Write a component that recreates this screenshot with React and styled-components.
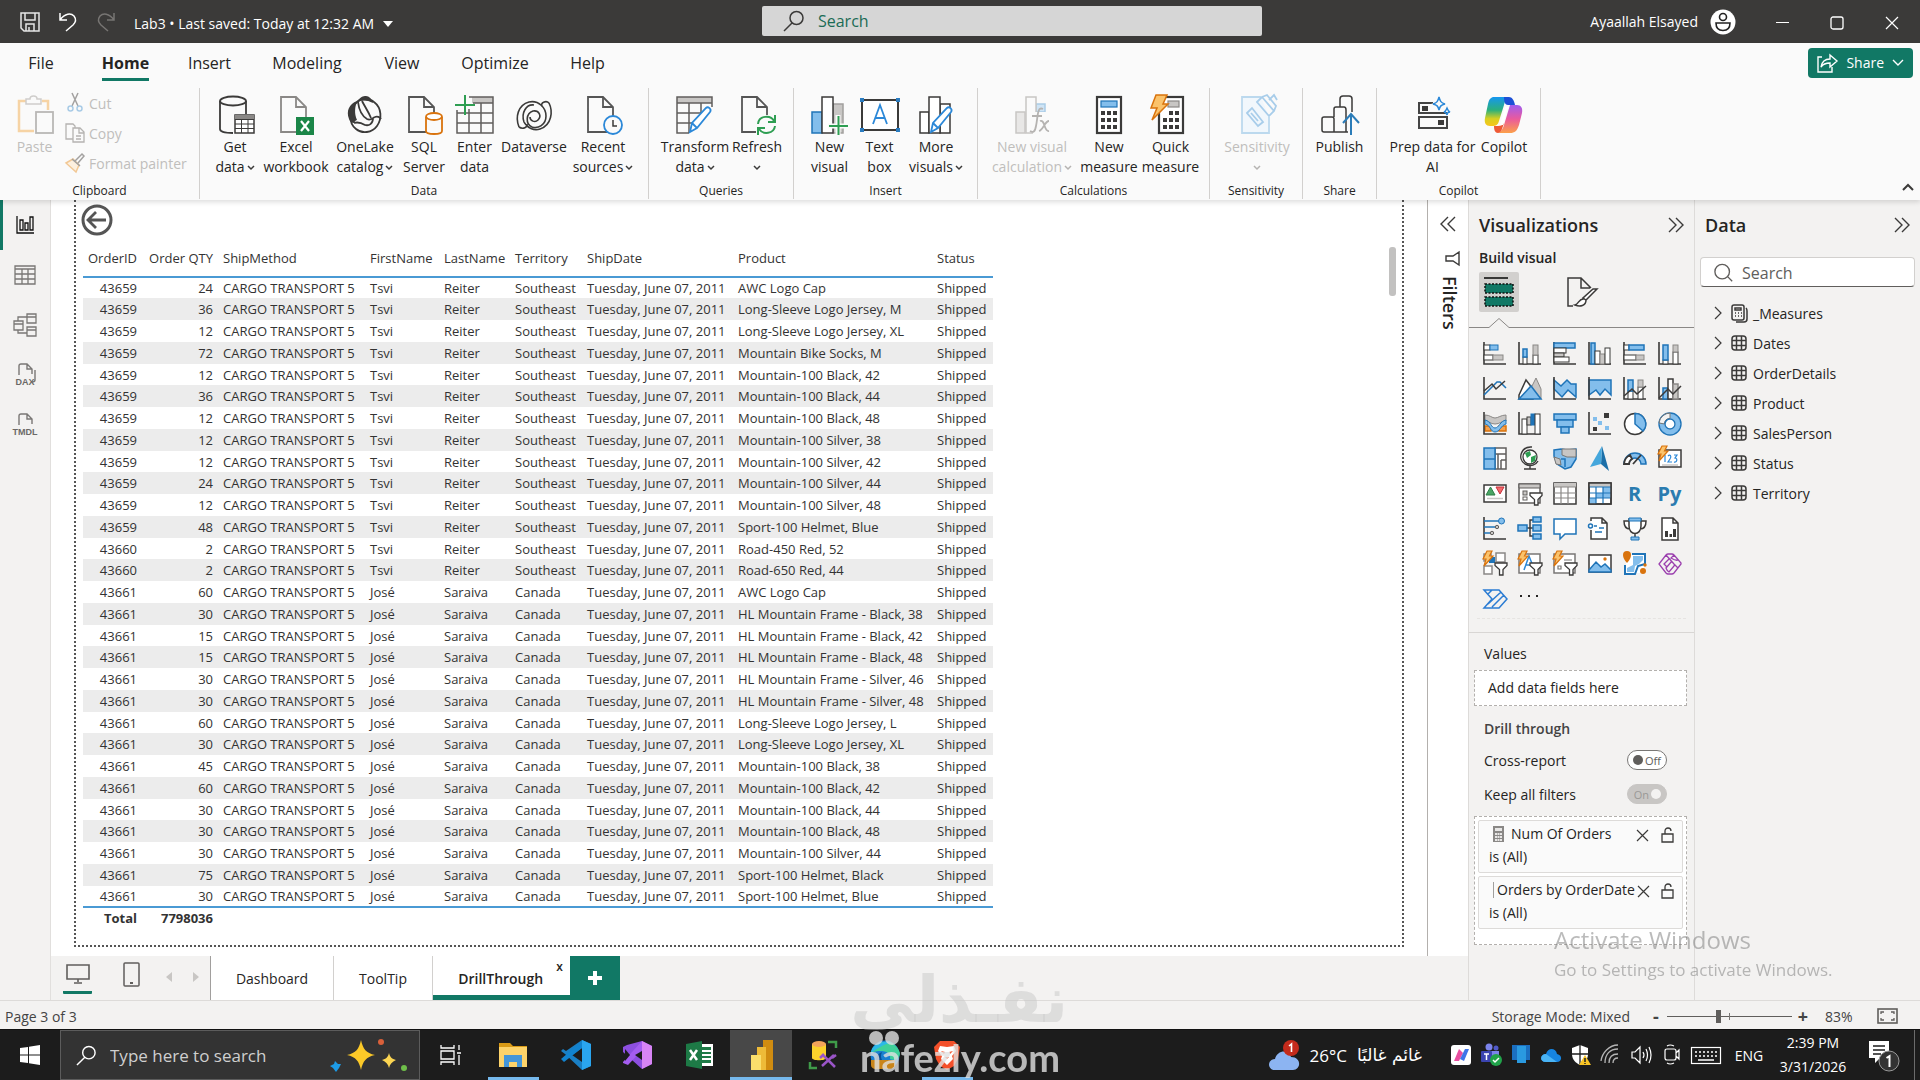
import React from "react";
import styled, { createGlobalStyle, css } from "styled-components";

const INK = "#3b3a39";
const BLUE = "#1f74b8";
const SKY = "#83beec";
const GREY = "#c8c6c4";
const GREEN = "#117865";
const ORANGE = "#d9730d";

const GlobalStyle = createGlobalStyle`
  *, *::before, *::after { box-sizing: border-box; }
  body {
    margin: 0;
    font-family: "Open Sans", "Noto Sans", "DejaVu Sans", sans-serif;
    font-size: 14px;
    color: #252423;
    background: #f3f2f1;
  }
  button, input { font: inherit; color: inherit; }
  button { margin: 0; padding: 0; border: 0; background: none; cursor: pointer; }
`;

/* ---------- drawing helpers ---------- */

const Svg = styled.svg`
  display: block;
  flex: none;
  overflow: visible;
`;

const Icon = ({ w = 24, h = w, box = `0 0 ${w} ${h}`, children }) => (
  <Svg width={w} height={h} viewBox={box} fill="none" aria-hidden="true">
    {children}
  </Svg>
);

const P = ({ d, s = INK, f = "none", w = 1.5, ...rest }) => (
  <path d={d} stroke={s} fill={f} strokeWidth={w} {...rest} />
);
const R = ({ x, y, w, h, s = INK, f = "none", sw = 1.5, ...rest }) => (
  <rect x={x} y={y} width={w} height={h} stroke={s} fill={f} strokeWidth={sw} {...rest} />
);

const ChevronDown = ({ color = INK }) => (
  <Icon w={8} h={5}>
    <P d="M1 1l3 3 3-3" s={color} />
  </Icon>
);
const DoubleChevron = ({ left }) => (
  <Icon w={16} h={16}>
    <P d={left ? "M8 1L1 8l7 7M15 1L8 8l7 7" : "M1 1l7 7-7 7M8 1l7 7-7 7"} w={1.4} />
  </Icon>
);
const Magnifier = ({ color, size = 22, flip }) => (
  <Icon w={size} box="0 0 22 22">
    {flip ? (
      <P d="M13.5 1.5a6.5 6.5 0 1 1 0 13 6.5 6.5 0 0 1 0-13zM9 13l-8 8" s={color} />
    ) : (
      <P d="M9 1.5a8 8 0 1 1 0 16 8 8 0 0 1 0-16zM15 15l5 5" s={color} />
    )}
  </Icon>
);
const Bolt = () => <P d="M4-1L9-1 6.5 4H10L1 14 3 7H0z" s={ORANGE} f="#fbc36b" w={1.2} />;
const Funnel = () => <P d="M12 11H24V13.5L20 17.5V23H16.5V17.5L12 13.5z" f="#fff" w={1.3} />;
const Pencil = () => (
  <P d="M15 37l2-9L31 13c2-2 6 1 4 4L22 33z M17 28l5 5" s="#2b88d8" f="#fff" w={1.8} />
);

/* ---------- title bar ---------- */

const Shell = styled.div`
  display: flex;
  flex-direction: column;
  min-height: 100vh;
`;
const TitleBar = styled.header`
  display: grid;
  grid-template-columns: 1.158fr minmax(200px, 500px) 1fr;
  align-items: center;
  height: 43px;
  background: #3b3a39;
  color: #fff;
`;
const QuickAccess = styled.div`
  display: flex;
  align-items: center;
  gap: 18px;
  padding-left: 20px;
`;
const FileName = styled.button`
  display: flex;
  align-items: center;
  gap: 9px;
  padding-top: 4px;
  white-space: nowrap;
`;
const TopSearch = styled.label`
  display: flex;
  align-items: center;
  gap: 13px;
  height: 30px;
  margin-bottom: 1px;
  padding-left: 21px;
  border-radius: 2px;
  background: #d6d6d6;
`;
const PlainInput = styled.input`
  flex: 1;
  min-width: 0;
  padding: 0;
  border: 0;
  outline: 0;
  background: none;
  font-size: 16px;
  &::placeholder { color: ${(p) => p.$hint}; opacity: 1; }
`;
const WindowControls = styled.div`
  display: flex;
  align-items: center;
  justify-content: flex-end;
`;
const UserName = styled.span`
  margin-right: 12px;
`;
const WindowButton = styled.button`
  display: grid;
  place-items: center;
  width: 55px;
  height: 43px;
`;
const Avatar = styled.button`
  margin-right: 19px;
`;

const Title = () => (
  <TitleBar>
    <QuickAccess>
      <button aria-label="Save">
        <Icon w={20}>
          <P d="M1 1H19V19H4L1 16zM5 1V8H15V1M6 19V12H14V19M9 15V19" s="#e6e6e6" />
        </Icon>
      </button>
      <button aria-label="Undo">
        <Icon w={20}>
          <P d="M2 1V8H9M2 8C7 1 13 1 16 4c3 4 1 7-1 9L8 19" s="#fff" />
        </Icon>
      </button>
      <button aria-label="Redo">
        <Icon w={20}>
          <P d="M18 1V8H11M18 8C13 1 7 1 4 4c-3 4-1 7 1 9L12 19" s="#777573" />
        </Icon>
      </button>
      <FileName>
        Lab3 • Last saved: Today at 12:32 AM
        <Icon w={10} h={6}>
          <path d="M0 0H10L5 6z" fill="#fff" />
        </Icon>
      </FileName>
    </QuickAccess>
    <TopSearch>
      <Magnifier color={INK} flip />
      <PlainInput $hint="#1b6b55" placeholder="Search" aria-label="Search" />
    </TopSearch>
    <WindowControls>
      <UserName>Ayaallah Elsayed</UserName>
      <Avatar aria-label="Account">
        <Icon w={26}>
          <circle cx="13" cy="13" r="12.5" fill="#fff" />
          <circle cx="13" cy="8" r="3.5" stroke="#222" strokeWidth="1.6" />
          <P d="M6 14H20C20 19 17 21.5 13 21.5S6 19 6 14z" s="#222" w={1.6} />
        </Icon>
      </Avatar>
      <WindowButton aria-label="Minimize">
        <Icon w={14}><P d="M1 7.5H14" s="#fff" w={1} /></Icon>
      </WindowButton>
      <WindowButton aria-label="Maximize">
        <Icon w={14}><R x={1} y={2} w={12} h={12} s="#fff" sw={1.3} rx={2} /></Icon>
      </WindowButton>
      <WindowButton aria-label="Close">
        <Icon w={14}><P d="M1 2L13 14M13 2L1 14" s="#fff" w={1.2} /></Icon>
      </WindowButton>
    </WindowControls>
  </TitleBar>
);

/* ---------- ribbon icons ---------- */

const Sheet = ({ dim }) => (
  <>
    <P d="M5 2H20L30 12V37H5z" s={dim || "#555"} f="#fafafa" w={1.8} />
    <P d="M20 2V12H30" s={dim || "#555"} w={1.8} />
  </>
);

const ribbonIcons = {
  paste: (
    <>
      <P d="M11 6H4V36H19M27 6H33V15" s="#f6d3a4" w={2.5} />
      <P d="M11 4H15C15 0 22 0 22 4H26V9H11z" s="#cfcdcb" f="#fafafa" />
      <R x={21} y={17} w={17} h={21} s="#b9b7b5" f="#fafafa" sw={1.8} />
    </>
  ),
  getData: (
    <>
      <P d="M5 6V34c0 3 6 4 13 4V18H31V6" f="#fafafa" s="none" />
      <P d="M5 6V34c0 3 5 4 13 4M31 6V19" w={1.8} />
      <ellipse cx="18" cy="6" rx="13" ry="4.5" stroke={INK} strokeWidth="1.8" />
      <R x={20} y={20} w={19} h={18} f="#fff" />
      <rect x="20" y="20" width="19" height="4" fill="#8a8886" />
      <P d="M20 24.5H39M20 29H39M20 33.5H39M26.5 24V38M33 24V38" w={1} />
    </>
  ),
  excel: (
    <>
      <Sheet dim="#8a8886" />
      <R x={20} y={22} w={18} h={18} s="none" f="#1b8648" />
      <P d="M25 26L33 36M33 26L25 36" s="#fff" w={2.2} />
    </>
  ),
  onelake: (
    <>
      <P d="M12 7C16 3 24 3 29 7c8 6 8 17 3 24-5 7-15 8-21 3C3 28 4 14 12 7z" w={1.8} />
      <path d="M12 6C4 9 1 16 4 24c1 3 3 4 5 4 1-2 2-3 3-3-3-7-2-13 0-19z" fill={INK} />
      <path d="M13 6c2-4 5-5 8-5 3 0 6 3 7 7-5-3-10-3-15-2z" fill={INK} />
      <P d="M13 7c1 8 4 14 9 17 4 2 5-1 8-2 2-1 5 0 6 2M9 28c3-1 6-1 11 2 4 1 8-1 8-7M17 6c3 6 6 10 9 17" w={1.8} />
    </>
  ),
  sql: (
    <>
      <Sheet />
      <P d="M22 22V36c0 4 16 4 16 0V22" s={ORANGE} f="#fafafa" w={1.8} />
      <ellipse cx="30" cy="21.5" rx="8" ry="3.5" fill="#fff" stroke={ORANGE} strokeWidth="1.8" />
    </>
  ),
  enter: (
    <>
      <rect x="17" y="2" width="21" height="6" fill={GREY} />
      <P d="M14 2H38V38H2V15M2 18H38M2 28H38M14 14V38M26 8V38M18 8H38" s="#605e5c" />
      <P d="M10 0V20M0 10H20" s="#2e9e52" w={2} />
    </>
  ),
  dataverse: (
    <>
      <P d="M5 32C1 22 4 10 15 7c10-2 17 6 17 14 0 9-8 13-14 11-7-3-6-14 1-16 6-1 9 5 5 9-3 3-8 1-8-3" w={1.6} />
      <P d="M5 32c4 3 9 0 8-3M35 8c4 8 3 22-9 26-6 2-13-1-16-7C7 18 12 9 20 10M35 8c-3-3-9 0-7 3" w={1.6} />
    </>
  ),
  recent: (
    <>
      <Sheet />
      <circle cx="30" cy="30" r="9" fill="#fafafa" stroke="#2b88d8" strokeWidth="1.8" />
      <P d="M30 25V31H34" />
    </>
  ),
  transform: (
    <>
      <rect x="2" y="2" width="35" height="6" fill={GREY} />
      <P d="M37 12V2H2V38H14M2 8H37M2 18H27M2 28H18M14 8V38M26 8V18" s="#605e5c" />
      <Pencil />
    </>
  ),
  refresh: (
    <>
      <Sheet />
      <rect x="19" y="20" width="20" height="20" fill="#fafafa" />
      <P d="M21 29C22 20 34 20 37 26M38 20V27H31M38 31C37 39 26 40 22 34M21 40V33H28" s="#2e9e52" w={2} />
    </>
  ),
  newVisual: (
    <>
      <R x={2} y={17} w={10} h={21} f={SKY} s={BLUE} />
      <R x={23} y={9} w={10} h={29} f={GREY} s="#a19f9d" />
      <R x={12} y={2} w={11} h={36} f="#fff" />
      <P d="M28 20V40M18 31H38" s="#fafafa" w={5} />
      <P d="M28.5 21V40M19 31H38" s="#2e9e52" w={2} />
    </>
  ),
  textBox: (
    <>
      <R x={2} y={5} w={36} h={30} f="#fff" sw={2} />
      <P d="M13 29L20 10 27 29M15.5 23H24.5" s="#2b88d8" w={1.8} />
      <path d="M0 3h4v4H0zM36 3h4v4h-4zM0 33h4v4H0zM36 33h4v4h-4z" fill="#2b7cc0" />
    </>
  ),
  moreVisuals: (
    <>
      <P d="M4 17H13V38H4zM24 9H34V38H24z" f="#fff" />
      <R x={13} y={2} w={11} h={36} f="#fff" />
      <Pencil />
    </>
  ),
  visualCalc: (
    <>
      <R x={4} y={17} w={9} h={21} f="#e8e7e6" s={GREY} />
      <R x={24} y={9} w={9} h={8} f="#cfe4f5" s="#a9cbe6" />
      <R x={14} y={2} w={10} h={36} f="#fafafa" s={GREY} />
      <rect x="21" y="17" width="17" height="22" fill="#fafafa" />
      <P d="M31 14c-6-3-5 8-7 17-1 6-3 7-6 5M20 21H30M28 26c5-2 4 11 9 10M37 26c-4 0-6 9-10 10" s="#b5b3b1" w={1.8} />
    </>
  ),
  measure: (
    <>
      <R x={8} y={2} w={24} h={36} f="#fff" sw={2.2} />
      <R x={12} y={6} w={16} h={6} f={SKY} s={BLUE} sw={1.2} />
      <path d="M12 16h4v4h-4zM18 16h4v4h-4zM24 16h4v4h-4zM12 23h4v4h-4zM18 23h4v4h-4zM24 23h4v4h-4zM12 30h4v4h-4zM18 30h4v4h-4zM24 30h4v4h-4z" fill={INK} />
    </>
  ),
  quick: (
    <>
      <R x={8} y={2} w={24} h={36} f="#fff" sw={2.2} />
      <R x={17} y={6} w={11} h={6} f={GREY} s="#8a8886" sw={1.2} />
      <path d="M18 16h4v4h-4zM24 16h4v4h-4zM12 23h4v4h-4zM18 23h4v4h-4zM24 23h4v4h-4zM12 30h4v4h-4zM18 30h4v4h-4zM24 30h4v4h-4z" fill={INK} />
      <P d="M5 0H16L12 9H17L1 25 6 13H0z" s={ORANGE} f="#fbc36b" />
    </>
  ),
  sensitivity: (
    <>
      <P d="M24 2H5V38H32V22" s="#bcd9ee" f="#f1f7fc" w={1.8} />
      <P d="M10 18L15 13 26 27 21 31zM14 18L21 26M20 7L25 2 37 16 32 21zM25 2L30 0 39 11 37 16M32 5L37 0 40 5" s="#a8cdea" w={1.8} />
    </>
  ),
  publish: (
    <>
      <P d="M14 22V14q0-2 2-2h4V4q0-3 3-3h6q3 0 3 3V17M4 22h8q2 0 2 2V37H4q-2 0-2-2V24q0-2 2-2zM14 37H28M20 12h4q2 0 2 3V37" />
      <P d="M31 40V20M23 28L31 19 39 28" s="#2b7cb8" w={2} />
    </>
  ),
  prep: (
    <>
      <P d="M20 8H6V18H34M6 22H34V33H6z" s="#444" w={2} />
      <path d="M9 11h6v5H9zM25 25h6v5h-6z" fill={INK} />
      <path d="M26 0c1 5 3 8 8 9-5 1-7 3-8 8-1-5-3-7-8-8 5-1 7-4 8-9z" fill="#fafafa" />
      <P d="M26 2c1 4 2 6 6 7-4 1-5 2-6 6-1-4-2-5-6-6 4-1 5-3 6-7zM34 13c1 2 1 3 3 4-2 0-3 1-3 3-1-2-1-3-3-3 2-1 2-2 3-4z" s="#2b88d8" w={1.5} />
    </>
  ),
  copilot: (
    <>
      <defs>
        <linearGradient id="cpA" x1="0" y1="0" x2="0" y2="1">
          <stop offset="0" stopColor="#1596f0" />
          <stop offset=".45" stopColor="#2bb07c" />
          <stop offset=".75" stopColor="#d9cf1f" />
          <stop offset="1" stopColor="#f7c51c" />
        </linearGradient>
        <linearGradient id="cpB" x1="0" y1="0" x2="0" y2="1">
          <stop offset="0" stopColor="#a05cf0" />
          <stop offset=".5" stopColor="#ea5a9c" />
          <stop offset="1" stopColor="#fca04a" />
        </linearGradient>
      </defs>
      <path d="M14 38H26c5 0 7-2 9-8l3-12c1-5-1-8-5-8H26L20 30c-1 4-4 8-6 8z" fill="url(#cpB)" />
      <path d="M10 2H25c-3 1-4 4-5 8L15 26c-1 4-3 5-7 5H6c-4 0-6-3-5-8L4 9C5 4 7 2 10 2z" fill="url(#cpA)" />
      <path d="M20 2h5c3 0 5 3 6 8h-7c-3 0-4-3-4-8z" fill="#1c4fd6" />
      <path d="M10 31h4c3 0 5-1 6-3l-2 6c-1 3-3 4-4 4-3 0-4-3-4-7z" fill="#ee5a36" />
      <path d="M24 12H21L16 30H19z" fill="#fff" />
    </>
  ),
};

/* ---------- ribbon ---------- */

const Ribbon = styled.section`
  position: relative;
  z-index: 1;
  height: 157px;
  background: #fafafa;
  box-shadow: 0 2px 5px rgba(0, 0, 0, 0.14);
`;
const TabRow = styled.nav`
  display: flex;
  align-items: center;
  height: 39px;
`;
const RibbonTab = styled.button`
  width: ${(p) => p.$w}px;
  height: 39px;
  font-size: 16px;
  font-weight: ${(p) => (p.$active ? 700 : 400)};
  text-align: center;
  span {
    display: inline-block;
    height: 36px;
    line-height: 36px;
    border-bottom: 3px solid ${(p) => (p.$active ? GREEN : "transparent")};
  }
`;
const ShareButton = styled.button`
  display: flex;
  align-items: center;
  gap: 8px;
  height: 30px;
  margin: 0 7px 0 auto;
  padding: 0 9px;
  border-radius: 4px;
  background: ${GREEN};
  color: #fff;
`;
const RibbonBody = styled.div`
  display: flex;
  height: 118px;
  padding-top: 6px;
`;
const Group = styled.div`
  display: flex;
  flex-direction: column;
  flex: none;
  width: ${(p) => p.$w}px;
  height: 111px;
  border-right: 1px solid #d2d0ce;
`;
const GroupItems = styled.div`
  display: flex;
  flex: 1;
  padding: ${(p) => (p.$flush ? "0" : "5px 0 0 10px")};
`;
const GroupName = styled.div`
  height: 16px;
  font-size: 12px;
  line-height: 16px;
  text-align: center;
`;
const BigButton = styled.button`
  display: flex;
  flex-direction: column;
  align-items: center;
  flex: none;
  width: ${(p) => p.$w}px;
  color: ${(p) => (p.disabled ? "#c0bebc" : "#252423")};
  line-height: 20px;
  white-space: nowrap;
`;
const PasteButton = styled(BigButton)`
  padding: 5px 0 0 4px;
`;
const BigIcon = styled.span`
  display: grid;
  place-items: center;
  height: 44px;
`;
const LabelLine = styled.span`
  display: flex;
  align-items: center;
  gap: 2px;
  height: 20px;
`;
const SmallList = styled.div`
  display: flex;
  flex-direction: column;
`;
const SmallButton = styled.button`
  display: flex;
  align-items: center;
  gap: 4px;
  height: 30px;
  color: #c0bebc;
  white-space: nowrap;
`;
const CollapseButton = styled.button`
  align-self: flex-end;
  margin: 0 6px 9px auto;
`;

const tabs = [
  ["File", 82], ["Home", 87], ["Insert", 81], ["Modeling", 114],
  ["View", 76], ["Optimize", 110], ["Help", 75],
];

const groups = [
  ["Data", 449, [
    ["getData", 50, "Get", "data", 1], ["excel", 72, "Excel", "workbook"],
    ["onelake", 66, "OneLake", "catalog", 1], ["sql", 52, "SQL", "Server"],
    ["enter", 49, "Enter", "data"], ["dataverse", 70, "Dataverse"],
    ["recent", 68, "Recent", "sources", 1],
  ]],
  ["Queries", 145, [["transform", 72, "Transform", "data", 1], ["refresh", 52, "Refresh", "", 1]]],
  ["Insert", 184, [["newVisual", 51, "New", "visual"], ["textBox", 49, "Text", "box"], ["moreVisuals", 64, "More", "visuals", 1]]],
  ["Calculations", 232, [["visualCalc", 88, "New visual", "calculation", 1, 1], ["measure", 66, "New", "measure"], ["quick", 57, "Quick", "measure"]]],
  ["Sensitivity", 93, [["sensitivity", 74, "Sensitivity", "", 1, 1]]],
  ["Share", 74, [["publish", 53, "Publish"]]],
  ["Copilot", 164, [["prep", 91, "Prep data for", "AI"], ["copilot", 52, "Copilot"]]],
];

const RibbonArea = () => (
  <Ribbon>
    <TabRow>
      {tabs.map(([name, w]) => (
        <RibbonTab key={name} $w={w} $active={name === "Home"}><span>{name}</span></RibbonTab>
      ))}
      <ShareButton>
        <Icon w={21} h={20}>
          <P d="M5 4H1V19H15V14M4 14C5 8 9 6 13 6V2L20 8 13 14V10C9 10 6 11 4 14z" s="#fff" w={1.4} />
        </Icon>
        Share
        <Icon w={12} h={7}><P d="M1 1l5 5 5-5" s="#fff" w={1.4} /></Icon>
      </ShareButton>
    </TabRow>
    <RibbonBody>
      <Group $w={200}>
        <GroupItems $flush>
          <PasteButton $w={65} disabled>
            <BigIcon><Icon w={40}>{ribbonIcons.paste}</Icon></BigIcon>
            Paste
          </PasteButton>
          <SmallList>
            <SmallButton disabled>
              <Icon w={20}>
                <P d="M7 0L13 13M13 0L7 13" s="#a3a1a0" />
                <circle cx="5.5" cy="15.5" r="2.5" stroke="#a9cbe6" strokeWidth="1.5" />
                <circle cx="14.5" cy="15.5" r="2.5" stroke="#a9cbe6" strokeWidth="1.5" />
              </Icon>
              Cut
            </SmallButton>
            <SmallButton disabled>
              <Icon w={20}>
                <P d="M8 16H1V1H8L10 3V5M8 5H15L19 9V19H8zM14 5V10H19M11 13H16M11 16H16" s="#b5b3b1" w={1.3} />
              </Icon>
              Copy
            </SmallButton>
            <SmallButton disabled>
              <Icon w={20}>
                <P d="M1 10L8 6 14 12 11 19z" s="#f2c895" f="#fdf0df" />
                <P d="M7 6L15 13M10 8L17 1 19 3 13 10" s="#a3a1a0" />
              </Icon>
              Format painter
            </SmallButton>
          </SmallList>
        </GroupItems>
        <GroupName>Clipboard</GroupName>
      </Group>
      {groups.map(([name, w, items]) => (
        <Group key={name} $w={w}>
          <GroupItems>
            {items.map(([icon, bw, l1, l2, menu, off]) => (
              <BigButton key={icon} $w={bw} disabled={!!off}>
                <BigIcon><Icon w={40}>{ribbonIcons[icon]}</Icon></BigIcon>
                <LabelLine>{l1}</LabelLine>
                <LabelLine>
                  {l2}
                  {menu ? <ChevronDown color={off ? "#b5b3b1" : INK} /> : null}
                </LabelLine>
              </BigButton>
            ))}
          </GroupItems>
          <GroupName>{name}</GroupName>
        </Group>
      ))}
      <CollapseButton aria-label="Collapse ribbon">
        <Icon w={12} h={8}><P d="M1 7l5-5 5 5" w={2} /></Icon>
      </CollapseButton>
    </RibbonBody>
  </Ribbon>
);

/* ---------- left navigation ---------- */

const Workspace = styled.div`
  display: flex;
  flex: 1;
  min-height: 0;
`;
const Nav = styled.nav`
  flex: none;
  width: 51px;
  border-right: 1px solid #e1dfdd;
`;
const NavButton = styled.button`
  display: grid;
  place-items: center;
  width: 50px;
  height: 50px;
  padding-right: 3px;
  border-left: 3px solid ${(p) => (p.$active ? GREEN : "transparent")};
`;
const FileBadge = styled.span`
  display: grid;
  justify-items: center;
  color: #6b6967;
  font-family: "Liberation Sans", Arial, sans-serif;
  font-size: 9px;
  font-weight: 700;
  line-height: 8px;
`;
const PageGlyph = ({ stacked }) => (
  <Icon w={18} h={14}>
    <P d="M3 11V2Q3 0 5 0H11L16 5V10M11 0V5H16" s="#797775" w={1.4} />
    {stacked ? <P d="M19 6V16Q19 18 16 18" s="#797775" w={1.4} /> : null}
  </Icon>
);

const LeftNav = () => (
  <Nav>
    <NavButton $active aria-label="Report view">
      <Icon w={18}><P d="M1 0V17H18M4 14V4H7V14zM9 14V7H12V14zM14 14V1H17V14z" s="#111" w={1.3} /></Icon>
    </NavButton>
    <NavButton aria-label="Table view">
      <Icon w={20}><P d="M0 1H20V19H0zM0 4H20M0 9H20M0 14H20M7 4V19M13 4V19" s="#797775" w={1.3} /></Icon>
    </NavButton>
    <NavButton aria-label="Model view">
      <Icon w={24}><P d="M1 8H10V17H1zM1 11H10M14 1H23V10H14zM14 4H23M14 14H23V23H14zM14 17H23M5 8V4H14M5 17V20H14" s="#797775" w={1.3} /></Icon>
    </NavButton>
    <NavButton aria-label="DAX query view"><FileBadge><PageGlyph stacked />DAX</FileBadge></NavButton>
    <NavButton aria-label="TMDL view"><FileBadge><PageGlyph />TMDL</FileBadge></NavButton>
  </Nav>
);

/* ---------- report canvas ---------- */

const Center = styled.main`
  display: flex;
  flex-direction: column;
  flex: 1;
  min-width: 0;
`;
const CanvasRow = styled.div`
  display: flex;
  flex: 1;
  background: #fff;
`;
const Canvas = styled.div`
  display: flex;
  flex: 1;
  min-width: 0;
  padding: 0 23px 9px;
`;
const ReportPage = styled.div`
  display: flex;
  justify-content: space-between;
  flex: 1;
  padding: 4px 5px 0 5px;
  border: 2px dotted #555;
  border-top: 0;
`;
const BackButton = styled.button`
  display: block;
  height: 32px;
`;
const ScrollThumb = styled.div`
  width: 7px;
  height: 49px;
  margin: 43px 1px 0 0;
  border-radius: 3px;
  background: #c2c1c0;
`;
const DataTable = styled.table`
  width: 910px;
  margin: 5px 0 0 2px;
  border-collapse: collapse;
  table-layout: fixed;
  font-size: 13px;
  line-height: 18px;
  color: #333;
  white-space: nowrap;
  th, td { padding: 0 5px; text-align: left; font-weight: 400; }
  th { padding-bottom: 2px; }
  th:nth-child(-n + 2), td:nth-child(-n + 2) { text-align: right; }
  thead tr { height: 36px; border-bottom: 2px solid #4a9ad4; }
  tbody tr { height: 22px; }
  tbody tr:nth-child(4n + 1) { height: 21px; }
  tbody tr:nth-child(even) { background: #ececec; }
  tfoot tr { height: 20px; border-top: 2px solid #4a9ad4; }
  tfoot td { font-weight: 700; }
`;

const columns = [
  ["OrderID", 59], ["Order QTY", 76], ["ShipMethod", 147], ["FirstName", 74], ["LastName", 71],
  ["Territory", 72], ["ShipDate", 151], ["Product", 199], ["Status", 61],
];
const orders = [
  [43659, "Tsvi", "Reiter", "Southeast", [
    [24, "AWC Logo Cap"], [36, "Long-Sleeve Logo Jersey, M"], [12, "Long-Sleeve Logo Jersey, XL"],
    [72, "Mountain Bike Socks, M"], [12, "Mountain-100 Black, 42"], [36, "Mountain-100 Black, 44"],
    [12, "Mountain-100 Black, 48"], [12, "Mountain-100 Silver, 38"], [12, "Mountain-100 Silver, 42"],
    [24, "Mountain-100 Silver, 44"], [12, "Mountain-100 Silver, 48"], [48, "Sport-100 Helmet, Blue"],
  ]],
  [43660, "Tsvi", "Reiter", "Southeast", [[2, "Road-450 Red, 52"], [2, "Road-650 Red, 44"]]],
  [43661, "José", "Saraiva", "Canada", [
    [60, "AWC Logo Cap"], [30, "HL Mountain Frame - Black, 38"], [15, "HL Mountain Frame - Black, 42"],
    [15, "HL Mountain Frame - Black, 48"], [30, "HL Mountain Frame - Silver, 46"],
    [30, "HL Mountain Frame - Silver, 48"], [60, "Long-Sleeve Logo Jersey, L"],
    [30, "Long-Sleeve Logo Jersey, XL"], [45, "Mountain-100 Black, 38"], [60, "Mountain-100 Black, 42"],
    [30, "Mountain-100 Black, 44"], [30, "Mountain-100 Black, 48"], [30, "Mountain-100 Silver, 44"],
    [75, "Sport-100 Helmet, Black"], [30, "Sport-100 Helmet, Blue"],
  ]],
];
const rows = orders.flatMap(([id, first, last, area, lines]) =>
  lines.map(([qty, product]) => [
    id, qty, "CARGO TRANSPORT 5", first, last, area, "Tuesday, June 07, 2011", product, "Shipped",
  ])
);

const OrdersTable = () => (
  <DataTable>
    <colgroup>
      {columns.map(([name, w]) => <col key={name} width={w} />)}
    </colgroup>
    <thead>
      <tr>{columns.map(([name]) => <th key={name} scope="col">{name}</th>)}</tr>
    </thead>
    <tbody>
      {rows.map((cells, i) => (
        <tr key={i}>{cells.map((cell, j) => <td key={j}>{cell}</td>)}</tr>
      ))}
    </tbody>
    <tfoot>
      <tr><td>Total</td><td>7798036</td><td colSpan={7} /></tr>
    </tfoot>
  </DataTable>
);

const FiltersPane = styled.aside`
  display: flex;
  flex-direction: column;
  align-items: center;
  flex: none;
  width: 41px;
  padding-top: 16px;
  border-left: 1px solid #b3b0ad;
  background: #fff;
`;
const FiltersTitle = styled.span`
  margin: 10px 0 0 3px;
  writing-mode: vertical-rl;
  font-size: 18px;
  font-weight: 600;
  line-height: 20px;
`;
const FunnelButton = styled.button`
  margin: 19px 0 0 8px;
`;

/* ---------- page tabs ---------- */

const PagesBar = styled.div`
  display: flex;
  height: 44px;
  background: #f3f2f1;
`;
const LayoutSwitch = styled.div`
  display: flex;
  align-items: flex-start;
  width: 160px;
  padding-top: 6px;
  border-right: 1px solid #a19f9d;
`;
const LayoutButton = styled.button`
  display: grid;
  justify-items: center;
  align-items: start;
  width: 30px;
  height: 32px;
  margin: 0 12px 0 12px;
  padding-top: ${(p) => (p.$active ? 2 : 0)}px;
  border-bottom: 3px solid ${(p) => (p.$active ? GREEN : "transparent")};
  border-radius: 1px;
  & + & { margin: 0 9px 0 13px; }
`;
const StepButton = styled.button`
  width: 28px;
  height: 30px;
  display: grid;
  place-items: center;
`;
const PageTab = styled.button`
  display: flex;
  align-items: center;
  justify-content: center;
  width: ${(p) => p.$w}px;
  border-right: 1px solid #d2d0ce;
  background: #fff;
  ${(p) => p.$active && css`
    font-weight: 600;
    border-right: 0;
    border-bottom: 5px solid ${GREEN};
    padding: 5px 0 0 18px;
  `}
`;
const CloseMark = styled.span`
  align-self: flex-start;
  margin-left: 13px;
  font-size: 12px;
  line-height: 12px;
`;
const AddPage = styled.button`
  display: grid;
  place-items: center;
  width: 50px;
  background: ${GREEN};
`;

/* ---------- visualizations pane ---------- */

const Pane = styled.aside`
  flex: none;
  width: 226px;
  border-left: 1px solid #dddbd9;
  background: #f3f2f1;
`;
const PaneHeader = styled.div`
  display: flex;
  align-items: center;
  justify-content: space-between;
  height: 48px;
  padding: 2px 10px 0 10px;
`;
const PaneTitle = styled.h2`
  margin: 0;
  font-size: 18px;
  font-weight: 600;
  line-height: 24px;
`;
const SubTitle = styled.h3`
  height: 24px;
  margin: 0 0 0 10px;
  font-size: 14px;
  font-weight: 600;
  line-height: 20px;
`;
const ModeTabs = styled.div`
  display: flex;
  gap: 44px;
  padding-left: 10px;
`;
const ModeTab = styled.button`
  display: grid;
  place-items: center;
  width: 40px;
  height: 40px;
  border-radius: 2px;
  background: ${(p) => (p.$active ? "#d2d0ce" : "none")};
`;
const NotchRule = styled.div`
  display: flex;
  height: 16px;
  align-items: flex-end;
  &::before { content: ""; width: 20px; border-bottom: 1px solid #8a8886; }
  &::after { content: ""; flex: 1; border-bottom: 1px solid #8a8886; }
`;
const VisualGrid = styled.div`
  display: grid;
  grid-template-columns: repeat(6, 35px);
  grid-auto-rows: 35px;
  height: 282px;
  margin: 8px 0 0 8px;
`;
const VisualButton = styled.button`
  display: grid;
  place-items: center;
`;
const Rule = styled.hr`
  margin: 0 ${(p) => (p.$inset ? "8px 13px" : "0 11px")};
  border: 0;
  border-top: 1px ${(p) => (p.$inset ? "dashed #e6e4e2" : "solid #d8d6d4")};
`;
const FieldLabel = styled.div`
  margin-left: 15px;
  line-height: 20px;
  font-weight: ${(p) => (p.$strong ? 600 : 400)};
  color: ${(p) => (p.$strong ? "#444" : "inherit")};
`;
const DropZone = styled.div`
  margin: 6px 7px 13px 5px;
  padding: 7px 13px;
  border: 1px dashed #b3b0ad;
  background: #fff;
  line-height: 20px;
`;
const ToggleGroup = styled.div`
  padding: 4px 27px 0 15px;
`;
const ToggleRow = styled.label`
  display: flex;
  align-items: center;
  justify-content: space-between;
  height: 34px;
`;
const ToggleTrack = styled.span`
  display: flex;
  flex-direction: ${(p) => (p.$on ? "row-reverse" : "row")};
  align-items: center;
  gap: 2px;
  width: 40px;
  height: 20px;
  padding: 0 5px;
  border: 1px solid ${(p) => (p.$on ? "#c8c6c4" : "#797775")};
  border-radius: 10px;
  background: ${(p) => (p.$on ? "#c8c6c4" : "#fff")};
  color: ${(p) => (p.$on ? "#9a9896" : "#605e5c")};
  font-size: 11px;
  input {
    appearance: none;
    flex: none;
    width: 10px;
    height: 10px;
    margin: 0;
    border-radius: 50%;
    background: ${(p) => (p.$on ? "#f3f2f1" : "#605e5c")};
  }
`;
const FilterWell = styled.div`
  display: grid;
  gap: 3px;
  margin: 5px 7px 0 5px;
  padding: 3px 4px 15px 3px;
  border: 1px dashed #b3b0ad;
  background: #fff;
`;
const FilterCard = styled.div`
  height: 53px;
  padding: 3px 8px 3px 10px;
  border: 1px solid #dddbd9;
  border-radius: 2px;
  background: #fafafa;
  line-height: 20px;
  white-space: nowrap;
`;
const CardHead = styled.div`
  display: flex;
  align-items: center;
  gap: ${(p) => (p.$tight ? 3 : 7)}px;
  height: 20px;
  margin-bottom: 3px;
  padding-left: 4px;
  button { padding-top: 2px; }
  button:first-of-type { margin: 0 ${(p) => (p.$tight ? 9 : 6)}px 0 auto; }
`;

const Axis = () => <P d="M1 0V22H23" w={1.6} />;
const CardFrame = () => <P d="M1 3H23V20H1z" f="#fff" />;

const visuals = [
  ["Stacked bar", <><Axis /><R x={1} y={3} w={6} h={5} f="#fff" sw={1} /><R x={7} y={3} w={8} h={5} f={SKY} s={BLUE} sw={1} /><R x={1} y={13} w={9} h={5} f="#fff" sw={1} /><R x={10} y={13} w={10} h={5} f={GREY} s="#8a8886" sw={1} /></>],
  ["Stacked column", <><Axis /><R x={5} y={15} w={4} h={7} f="#fff" sw={1} /><R x={5} y={7} w={4} h={8} f={SKY} s={BLUE} /><R x={15} y={13} w={5} h={9} f="#fff" sw={1} /><R x={15} y={3} w={5} h={10} f={GREY} s="#8a8886" sw={1} /></>],
  ["Clustered bar", <><Axis /><R x={1} y={1} w={21} h={5} f={SKY} s={BLUE} /><R x={1} y={6} w={12} h={5} f="#fff" sw={1} /><R x={1} y={11} w={10} h={4} f={GREY} sw={1} /><R x={1} y={15} w={15} h={5} f="#fff" sw={1} /></>],
  ["Clustered column", <><Axis /><R x={3} y={1} w={4} h={21} f={SKY} s={BLUE} /><R x={7} y={9} w={5} h={13} f="#fff" sw={1} /><R x={12} y={12} w={5} h={10} f={GREY} s="#8a8886" sw={1} /><R x={17} y={6} w={5} h={16} f="#fff" sw={1} /></>],
  ["100% stacked bar", <><Axis /><R x={1} y={3} w={5} h={5} f="#fff" sw={1} /><R x={6} y={3} w={15} h={5} f={SKY} s={BLUE} /><R x={1} y={13} w={12} h={5} f="#fff" sw={1} /><R x={13} y={13} w={8} h={5} f={GREY} s="#8a8886" sw={1} /></>],
  ["100% stacked column", <><Axis /><R x={5} y={18} w={5} h={4} f="#fff" sw={1} /><R x={5} y={3} w={5} h={15} f={SKY} s={BLUE} /><R x={15} y={10} w={5} h={12} f="#fff" sw={1} /><R x={15} y={3} w={5} h={7} f={GREY} s="#8a8886" sw={1} /></>],

  ["Line", <><Axis /><P d="M1 18L14 5 17 5 23 11" s={BLUE} /><P d="M1 14L9 7 13 12 22 4" /></>],
  ["Area", <><P d="M1 18L8 3 15 12V22H1z" f="#fff" /><P d="M13 11L18 1 23 12V22" f={GREY} s="#8a8886" w={1} /><P d="M1 22L13 9 23 22z" f={SKY} s={BLUE} /></>],
  ["Stacked area", <><P d="M1 3L8 9 14 3 18 7H23V20L15 13 9 20 1 12z" f={SKY} s={BLUE} /><Axis /></>],
  ["100% stacked area", <><P d="M1 3H23V18L17 12 12 18 8 13 1 18z" f={SKY} s={BLUE} /><Axis /></>],
  ["Line and stacked column", <><Axis /><R x={5} y={14} w={5} h={8} f="#fff" sw={1} /><R x={5} y={3} w={5} h={11} f={SKY} s={BLUE} /><R x={15} y={10} w={5} h={12} f="#fff" sw={1} /><R x={15} y={3} w={5} h={7} f={GREY} s="#8a8886" sw={1} /><P d="M1 19L9 12 14 17 23 9" /></>],
  ["Line and clustered column", <><Axis /><R x={5} y={11} w={5} h={11} f={SKY} s={BLUE} /><R x={10} y={2} w={5} h={20} f="#fff" /><R x={15} y={7} w={5} h={15} f={GREY} s="#8a8886" /><P d="M1 21L10 12 15 17 23 9" /></>],

  ["Ribbon", <><P d="M2 3C7 3 9 6 12 6S18 3 23 3V9C18 9 17 12 12 12S7 9 2 9z" f={GREY} s="#8a8886" w={1} /><P d="M2 14H8V19H2zM16 14H23V19H16z" f="#f5a04c" s={ORANGE} /><P d="M2 8C8 9 8 16 12 16S17 9 23 8V12C18 13 17 20 12 20S8 13 2 12z" f={SKY} s={BLUE} w={1} /><Axis /></>],
  ["Waterfall", <><Axis /><R x={4} y={7} w={5} h={15} f="#fff" sw={1} /><R x={9} y={5} w={4} h={8} f={GREY} sw={1} /><R x={13} y={2} w={4} h={11} f={BLUE} s={BLUE} sw={1} /><R x={17} y={2} w={5} h={20} f="#fff" sw={1} /></>],
  ["Funnel", <><R x={1} y={2} w={22} h={6} f={SKY} s={BLUE} /><R x={4} y={8} w={16} h={7} f={SKY} s={BLUE} /><R x={8} y={15} w={8} h={6} f={SKY} s={BLUE} /></>],
  ["Scatter", <><Axis /><path d="M16 1h5v5h-5zM5 15h4v4H5z" fill={INK} /><path d="M5 5h4v4H5zM10 9h4v4h-4zM17 14h4v4h-4z" fill={SKY} /></>],
  ["Pie", <><circle cx="12" cy="12" r="10.5" fill="#fff" stroke={INK} strokeWidth="1.5" /><P d="M12 12V1.500A10.5 10.5 0 0 1 20 19z" f={SKY} s={BLUE} /></>],
  ["Donut", <><circle cx="12" cy="12" r="8" stroke={SKY} strokeWidth="5" /><circle cx="12" cy="12" r="11" stroke={BLUE} strokeWidth="1.4" /><P d="M4 11A8 8 0 0 1 12 4" s="#f3f2f1" w={5} /><P d="M1 11A11 11 0 0 1 12 1V6.500A5 5 0 0 0 6.500 12z" s="#797775" w={1} /><circle cx="12" cy="12" r="5" fill="#fff" stroke={BLUE} strokeWidth="1.4" /></>],

  ["Treemap", <><R x={12} y={1} w={11} h={21} f="#fff" s="#605e5c" /><P d="M12 7H23M15 7V22M18 13H23M18 13V22" s="#605e5c" /><R x={1} y={1} w={11} h={21} f={SKY} s={BLUE} /><P d="M1 12H12" s={BLUE} /></>],
  ["Map", <><circle cx="12" cy="10" r="7" fill="#fff" stroke={INK} strokeWidth="1.3" /><path d="M7 6l5-2 1 4-4 3zM13 10l5-2-1 6-4 2z" fill="#2e9e52" /><P d="M14 0C3-1-1 12 7 17c6 3 11 1 13-3M12 18V22M6 22H18" w={1.4} /></>],
  ["Filled map", <><P d="M1 3L8 2 14 3 23 2V12L18 20 12 22 4 17 1 9z" f={SKY} s={BLUE} /><P d="M9 2L23 2V10H14L9 8zM1 10L7 12 8 18 3 17z" f={GREY} s="#797775" w={1} /><P d="M8 12H12V20" s={BLUE} /></>],
  ["Azure map", <><path d="M14-1L21 24 13 17z" fill="#1b6fa8" /><path d="M14-1L2 20 13 17z" fill="#45a7dc" /></>],
  ["Gauge", <><P d="M1 17A11 11 0 0 1 23 17H18A6 6 0 0 0 6 17z" f={SKY} s={BLUE} /><P d="M1 17A11 11 0 0 1 7 8L9 12A6 6 0 0 0 6 17zM10 17L18 8" f="#fff" w={1.8} /></>],
  ["Card (new)", <><CardFrame /><P d="M7 8V15M10 9c2-2 4 0 2 3l-2 3h4M16 8h3l-2 3c3 0 2 5-1 4" s="#2b88d8" w={1.2} /><P d="M4 18H20" s={GREY} /><Bolt /></>],

  ["KPI", <><CardFrame /><path d="M3 13L7.500 5 12 13z" fill="#4aa564" stroke="#2e7d46" /><path d="M13 5H21L17 12z" fill="#f26b6b" stroke="#c72f3b" /><P d="M4 16.500H20" s={GREY} /></>],
  ["Slicer", <><R x={1} y={2} w={21} h={19} f="#fff" s="#605e5c" /><path d="M1 2H22V6H1z" fill={GREY} stroke="#605e5c" /><R x={5} y={9} w={4} h={4} s="#605e5c" f={GREY} sw={1} /><R x={5} y={15} w={4} h={3} s="#605e5c" sw={1} /><Funnel /></>],
  ["Table", <><R x={1} y={1} w={22} h={21} f="#fff" /><path d="M1 1H23V5H1z" fill={GREY} /><P d="M1 5H23M1 11H23M1 16H23M8 5V22M15 5V22" s="#8a8886" w={1.2} /></>],
  ["Matrix", <><R x={1} y={1} w={22} h={21} f="#fff" /><path d="M1 1H23V5H1z" fill={GREY} /><path d="M1 16H23V5H15V11H8V22H1z" fill={SKY} /><P d="M1 5H23M1 11H23M1 16H23M8 5V22M15 5V22" s={BLUE} w={1.2} /><R x={1} y={1} w={22} h={21} /></>],
  ["R script", "R"],
  ["Python", "Py"],

  ["Key influencers", <><Axis /><P d="M1 4H16M1 10H12M1 16H7" s={BLUE} w={1.3} /><circle cx="18.5" cy="4" r="3" fill={SKY} stroke={BLUE} /><circle cx="14" cy="10" r="1.7" fill={GREY} stroke="#605e5c" /><circle cx="9" cy="16" r="1.7" fill={GREY} stroke="#605e5c" /></>],
  ["Decomposition tree", <><P d="M8 11H12M15 3H12V19H15M12 11H15" /><R x={0} y={8} w={9} h={6} f={SKY} s={BLUE} /><R x={15} y={0} w={8} h={5} f={SKY} s={BLUE} /><R x={15} y={8} w={8} h={6} f={SKY} s={BLUE} /><R x={15} y={17} w={8} h={5} f={SKY} s={BLUE} /></>],
  ["Q&A", <P d="M1 2H23V17H12L7 22V17H1z" f="#fff" s={BLUE} />],
  ["Narrative", <><P d="M3 4V1H14L19 6V22H3V13M14 1V6H19" f="#fff" /><circle cx="2.5" cy="9" r="2" fill="#fff" stroke={BLUE} strokeWidth="1.5" /><P d="M6 9H9M11 11H16M7 15H14" s={BLUE} /></>],
  ["Goals", <><P d="M6 2H18V9C18 19 6 19 6 9zM6 4H1C1 10 4 12 7 12M18 4H23C23 10 20 12 17 12M12 17V20" f="#fff" /><path d="M6 1H18V4H6zM8 20H16V23H8z" fill={SKY} stroke={BLUE} /></>],
  ["Paginated report", <><P d="M4 1H15L20 6V23H4zM15 1V6H20" f="#fff" /><path d="M7 14h3v6H7zM11.500 17h2.500v3h-2.500zM15 12h3v8h-3z" fill={INK} /></>],

  ["Button slicer", <><P d="M1 2H8V9H1zM13 1H22V10H13zM1 14H9V22H1z" s="#8a8886" f="#fff" /><path d="M6 5h6v6H6z" fill={BLUE} /><Bolt /><Funnel /></>],
  ["Text slicer", <><R x={1} y={2} w={21} h={19} s="#797775" f="#fff" /><P d="M6 18L11 4 15 14M8 13H13" s="#2b88d8" /><Bolt /><Funnel /></>],
  ["List slicer", <><R x={1} y={2} w={21} h={19} s="#797775" f="#fff" /><P d="M11 8H19M5 14H8V17H5z" s="#797775" w={1.2} /><Bolt /><Funnel /></>],
  ["Image", <><CardFrame /><P d="M1 18L8 10 13 15 17 12 23 18V20H1z" f={SKY} s={BLUE} /><circle cx="17" cy="7" r="1.7" fill={ORANGE} /></>],
  ["Shape map", <><path d="M3 3H21V21H3z" fill="#fff" /><P d="M9 2H22V12L15 14 12 22H2V13" s={BLUE} w={2} /><path d="M10 4H20V8L16 12 12 14 11 20H4V16L10 13z" fill={SKY} /><path d="M4-1a4 4 0 0 1 4 4c0 4-4 8-4 8S0 7 0 3a4 4 0 0 1 4-4z" fill={ORANGE} /><circle cx="20" cy="19" r="3" fill={ORANGE} /><circle cx="22" cy="13" r="1.7" fill={ORANGE} /></>],
  ["Power Apps", <P d="M10 2H14Q15 2 16 3L23 11Q23 12 23 12L16 21Q15 22 14 22H10Q9 22 8 21L1 12 8 3Q9 2 10 2zM8 3L16 12Q17 13 16 14L11 20Q9 19 8 16L14 9M16 3L13 6Q18 9 20 8M16 12L20 16M11 7L6 12 9 15" s="#9b3fae" w={1.3} />],

  ["Power Automate", <P d="M1 3H16L24 12 16 21H1L9 12zM5 7L9 3M5 17L18 5M9 20L21 8" s="#2b7cd3" />],
  ["More visuals", <path d="M2 8h2v2H2zM10 8h2v2h-2zM18 8h2v2h-2z" fill="#252423" />],
];

const ScriptMark = styled.span`
  color: #2b7cb0;
  font-size: 20px;
  font-weight: 700;
  line-height: 24px;
`;

const LockIcon = () => (
  <Icon w={13} h={16}>
    <P d="M1 7H12V15H1zM4 7V4C4 0 10 0 10 4" w={1.3} />
  </Icon>
);
const CrossIcon = () => (
  <Icon w={11} h={11}><P d="M0 0L11 11M11 0L0 11" w={1.2} /></Icon>
);

const Visualizations = () => (
  <Pane>
    <PaneHeader>
      <PaneTitle>Visualizations</PaneTitle>
      <button aria-label="Collapse visualizations"><DoubleChevron /></button>
    </PaneHeader>
    <SubTitle>Build visual</SubTitle>
    <ModeTabs>
      <ModeTab $active aria-label="Build visual">
        <Icon w={30}>
          <P d="M0 1H24" s="#111" w={1.6} />
          <R x={1} y={7} w={28} h={9} f={GREEN} s="#111" strokeDasharray="2 1.5" />
          <R x={1} y={20} w={28} h={9} f={GREEN} s="#111" strokeDasharray="2 1.5" />
        </Icon>
      </ModeTab>
      <ModeTab aria-label="Format page">
        <Icon w={30}>
          <P d="M5 29H0V1H13L23 11M13 1V11H22" />
          <P d="M29 12L18 23 15 21 25 12zM16 22C11 21 11 27 7 28c5 2 11 1 11-5" f="#fff" />
        </Icon>
      </ModeTab>
    </ModeTabs>
    <NotchRule>
      <Icon w={20} h={10}><P d="M0 9.500L10 0.500 20 9.500" s="#8a8886" w={1} /></Icon>
    </NotchRule>
    <VisualGrid>
      {visuals.map(([name, art]) => (
        <VisualButton key={name} aria-label={name}>
          {typeof art === "string" ? <ScriptMark>{art}</ScriptMark> : <Icon w={24} h={24}>{art}</Icon>}
        </VisualButton>
      ))}
    </VisualGrid>
    <Rule $inset />
    <Rule />
    <FieldLabel>Values</FieldLabel>
    <DropZone>Add data fields here</DropZone>
    <FieldLabel $strong>Drill through</FieldLabel>
    <ToggleGroup>
      <ToggleRow>
        Cross-report
        <ToggleTrack><input type="checkbox" />Off</ToggleTrack>
      </ToggleRow>
      <ToggleRow>
        Keep all filters
        <ToggleTrack $on><input type="checkbox" defaultChecked disabled />On</ToggleTrack>
      </ToggleRow>
    </ToggleGroup>
    <FilterWell>
      <FilterCard>
        <CardHead>
          <Icon w={11} h={16}>
            <rect width="11" height="16" fill="#8a8886" />
            <path d="M2 2h7v3H2zM2 7h2v2H2zM4.500 7h2v2h-2zM7 7h2v2H7zM2 10h2v2H2zM4.500 10h2v2h-2zM7 10h2v2H7zM2 13h2v2H2zM4.500 13h2v2h-2zM7 13h2v2H7z" fill="#e8e7e6" />
          </Icon>
          Num Of Orders
          <button aria-label="Remove Num Of Orders"><CrossIcon /></button>
          <button aria-label="Lock Num Of Orders"><LockIcon /></button>
        </CardHead>
        is (All)
      </FilterCard>
      <FilterCard>
        <CardHead $tight>
          <Icon w={1} h={16}><rect width="1" height="16" fill="#a19f9d" /></Icon>
          Orders by OrderDate
          <button aria-label="Remove Orders by OrderDate"><CrossIcon /></button>
          <button aria-label="Lock Orders by OrderDate"><LockIcon /></button>
        </CardHead>
        is (All)
      </FilterCard>
    </FilterWell>
  </Pane>
);

/* ---------- data pane ---------- */

const DataSearch = styled.label`
  display: flex;
  align-items: center;
  gap: 8px;
  height: 30px;
  margin: 9px 5px 11px 5px;
  padding: 2px 0 0 13px;
  border: 1px solid #d2d0ce;
  border-bottom-color: #605e5c;
  border-radius: 4px;
  background: #fff;
`;
const FieldList = styled.ul`
  margin: 0;
  padding: 0;
  list-style: none;
`;
const FieldButton = styled.button`
  display: flex;
  align-items: center;
  gap: 5px;
  width: 100%;
  height: 30px;
  padding-left: 19px;
  svg:first-child { margin-right: 4px; }
`;

const DataPane = () => (
  <Pane>
    <PaneHeader>
      <PaneTitle>Data</PaneTitle>
      <button aria-label="Collapse data"><DoubleChevron /></button>
    </PaneHeader>
    <DataSearch>
      <Magnifier color="#605e5c" size={20} />
      <PlainInput $hint="#605e5c" placeholder="Search" aria-label="Search fields" />
    </DataSearch>
    <FieldList>
      {["_Measures", "Dates", "OrderDetails", "Product", "SalesPerson", "Status", "Territory"].map((name, i) => (
        <li key={name}>
          <FieldButton>
            <Icon w={8} h={14}><P d="M1 1l6 6-6 6" w={1.2} /></Icon>
            <Icon w={17} h={18}>
              {i === 0 ? (
                <P d="M3 1H11Q13 1 13 3V14Q13 16 11 16H3Q1 16 1 14V3Q1 1 3 1zM4 4H10V6H4zM4 9H5M7 9H8M10 9H11M4 12H5M7 12H8M10 12H11M15 4Q16 5 16 7V15Q16 18 13 18H5" />
              ) : (
                <P d="M4 2H12Q15 2 15 5V13Q15 16 12 16H4Q1 16 1 13V5Q1 2 4 2zM1 6.500H15M1 11.500H15M5.500 2V16M10.500 2V16" />
              )}
            </Icon>
            {name}
          </FieldButton>
        </li>
      ))}
    </FieldList>
  </Pane>
);

/* ---------- status bar ---------- */

const StatusBar = styled.footer`
  display: flex;
  align-items: center;
  height: 30px;
  padding: 2px 22px 0 5px;
  border-top: 1px solid #dddbd9;
  border-bottom: 1px solid #111;
  color: #444;
`;
const StorageMode = styled.span`
  margin: 0 20px 0 auto;
`;
const ZoomButton = styled.button`
  width: 12px;
  font-size: 18px;
  font-weight: 700;
  line-height: 20px;
`;
const ZoomSlider = styled.input`
  appearance: none;
  width: 125px;
  height: 14px;
  margin: 0 5px;
  background:
    linear-gradient(#797775, #797775) 62px 50% / 1px 7px no-repeat,
    linear-gradient(#605e5c, #605e5c) 0 50% / 100% 1px no-repeat;
  &::-webkit-slider-thumb {
    appearance: none;
    width: 5px;
    height: 13px;
    background: #605e5c;
  }
`;
const ZoomValue = styled.span`
  width: 52px;
  margin-left: 16px;
`;

/* ---------- taskbar ---------- */

const Taskbar = styled.footer`
  display: flex;
  height: 50px;
  background: #1c1c1c;
  color: #fff;
`;
const TaskButton = styled.button`
  display: grid;
  place-items: center;
  flex: none;
  width: 62px;
  padding-top: 3px;
  background: ${(p) => (p.$active ? "#484848" : "none")};
  border-bottom: 3px solid transparent;
  ${(p) => p.$open && css`
    border-image: linear-gradient(to right,
      ${p.$active ? "#76b9ed 0 100%" : "transparent 0 6px, #76b9ed 6px 57px, transparent 57px"}) 0 0 3 0;
  `}
`;
const StartButton = styled.button`
  display: grid;
  place-items: center;
  flex: none;
  width: 60px;
`;
const TaskSearch = styled.label`
  display: flex;
  align-items: center;
  gap: 13px;
  width: 360px;
  padding: 0 11px 0 15px;
  border: 1px solid #5c5c5c;
  background: #333;
  input { font-size: 17px; }
`;
const Tray = styled.div`
  display: flex;
  align-items: center;
  margin-left: auto;
`;
const TrayItem = styled.button`
  display: grid;
  place-items: center;
  flex: none;
  width: ${(p) => p.$w || 30}px;
  height: 50px;
`;
const Weather = styled.button`
  display: flex;
  align-items: center;
  gap: 10px;
  margin-right: 24px;
  font-size: 17px;
`;
const Arabic = styled.span`
  font-family: "DejaVu Sans", sans-serif;
  font-size: 17px;
`;
const Clock = styled.time`
  width: 82px;
  line-height: 24px;
  text-align: center;
`;
const DesktopEdge = styled.span`
  width: 6px;
  height: 50px;
  border-left: 1px solid #6b6b6b;
`;

const apps = [
  ["File Explorer", 1, 0, <>
    <path d="M1 3h11l3 3h14v5H1z" fill="#d99a16" />
    <rect x="1" y="7" width="28" height="20" fill="#fdd36a" />
    <path d="M6 27V15h18v12h-5v-5h-8v5z" fill="#4596d8" />
  </>],
  ["Visual Studio Code", 0, 0, <>
    <path d="M22 0L31 4V26L22 30 5 14 1 11 3 9 6 11z" fill="#1a7fc4" />
    <path d="M22 0L31 4V26L22 30z" fill="#2aa5ef" />
    <path d="M22 8L12 15 22 22z" fill="#1c1c1c" />
    <path d="M1 19L22 1V8L4 22z" fill="#1183cf" />
  </>],
  ["Visual Studio", 0, 0, <>
    <path d="M20 1L30 6V24L20 29 1 12V7L5 5z" fill="#8d4fe0" />
    <path d="M20 1L30 6V24L20 29z" fill="#d784f5" />
    <path d="M1 22L20 1V10L6 25 1 23z" fill="#a45df0" />
    <path d="M20 11L13 15 20 20z" fill="#1c1c1c" />
    <path d="M3 9V21L8 15z" fill="#1c1c1c" />
  </>],
  ["Excel", 0, 0, <>
    <rect x="13" y="4" width="16" height="22" fill="#fff" />
    <path d="M18 7h9v3h-9zM18 12h9v2h-9zM18 16h9v2h-9zM18 20h9v3h-9z" fill="#1d7a46" />
    <path d="M2 4L18 1V29L2 26z" fill="#1d7a46" />
    <path d="M6 10L13 20M13 10L6 20" stroke="#fff" strokeWidth="2.5" />
  </>],
  ["Power BI", 1, 1, <>
    <path d="M17 0H27V30H17z" fill="#d08c10" />
    <path d="M11 7H20V30H11z" fill="#eebb38" />
    <path d="M5 15H15V30H5z" fill="#fadf6c" />
  </>],
  ["SQL Server Management Studio", 0, 0, <>
    <path d="M4 4V18c0 3 14 3 14 0V4z" fill="#fbd22c" />
    <ellipse cx="11" cy="4" rx="7" ry="3" fill="#f3a45a" />
    <P d="M20 2H28V8M2 22V28H9" s="#3f9b49" w={2.5} />
    <P d="M14 26L26 15M15 15L27 27M12 18L16 14M24 18L28 15" s="#9a55c8" w={2.5} />
  </>],
  ["Edge", 0, 0, <>
    <circle cx="15" cy="15" r="14.5" fill="#1a7fd0" />
    <path d="M1 13C3 0 25-4 30 13c0 6-6 8-10 6 2-8-10-10-19-6z" fill="#3fd09a" />
    <path d="M1 13C2 4 12 0 20 3 12 5 8 8 1 13z" fill="#2cb8e8" />
    <path d="M12 12c-4 8 4 15 14 12-7 9-22 6-20-5 1-4 3-6 6-7z" fill="#0c4f96" />
    <path d="M1 20H25V26Q24 29 20 29H5Q1 28 1 25z" fill="#c9851a" />
  </>],
  ["Brave", 1, 0, <>
    <path d="M8 1H22L28 7 26 19 22 26 15 30 8 26 4 19 2 7z" fill="#f4502a" />
    <path d="M8 6L15 7 22 6 24 11 20 16 21 19 15 25 9 19 10 16 6 11z" fill="#fff" />
    <path d="M9 11l4 1-1 2zM21 11l-4 1 1 2zM13 17h4l-2 2z" fill="#f4502a" />
  </>],
];

const trayIcons = [
  ["Notes", <><rect width="20" height="20" rx="3" fill="#fff" /><path d="M3 16L8 4l4 4-4 8z" fill="#e94fa0" /><path d="M9 14L14 4h4l-5 12z" fill="#3f74e8" /></>],
  ["Teams", <><circle cx="8" cy="2" r="3.5" fill="#7b83eb" /><circle cx="15" cy="3" r="2.5" fill="#5059c9" /><path d="M3 6H18V17H8z" fill="#7b83eb" /><rect x="0" y="6" width="11" height="11" rx="1" fill="#3b44b0" /><path d="M3 9H8M5.500 9V15" stroke="#fff" strokeWidth="1.5" /><circle cx="15" cy="15" r="6" fill="#21a34a" /><path d="M12 15l2 2 4-4" stroke="#fff" strokeWidth="1.5" /></>],
  ["Your Phone", <><rect x="1" y="0" width="18" height="15" fill="#1b6fc0" /><rect x="6" y="1" width="9" height="17" fill="#2a9ae0" /></>],
  ["OneDrive", <><path d="M5 17C-2 17-1 9 5 9 7 2 15 3 16 9c6 1 5 8 0 8z" fill="#1684e0" /><path d="M5 9l11 8H5C-2 17-1 9 5 9z" fill="#4ab4f5" /></>],
  ["Security", <><path d="M9 0L17 3V9C17 15 13 18 9 20 5 18 1 15 1 9V3z" fill="#fff" /><path d="M9 0V20M1 9H17" stroke="#1c1c1c" strokeWidth="1.3" /><path d="M14 10L20 20H8z" fill="#f7c325" /><path d="M14 13V17M14 18V19" stroke="#222" strokeWidth="1.5" /></>],
  ["Network", <P d="M4 18C4 9 9 4 17 4M8 18C8 12 11 9 17 9M12 18C12 15 14 13 17 13M0 16C1 8 8 0 17 0" s="#b5b5b5" w={1.3} />],
  ["Volume", <P d="M1 7H4L9 2V18L4 13H1zM12 7Q14 10 12 13M15 4Q18 10 15 16M18 2Q22 10 18 18" s="#fff" w={1.2} />],
  ["Meet now", <P d="M6 4H13Q15 4 15 6V13Q15 15 13 15H6Q4 15 4 13V6Q4 4 6 4zM15 8L18 5V14L15 11M6 1Q9-1 13 1M6 18Q9 20 13 18" s="#fff" w={1.2} />],
];

const WindowsTaskbar = () => (
  <Taskbar>
    <StartButton aria-label="Start">
      <Icon w={20}><path d="M0 3L8 2V9.500H0zM9 1.800L20 0V9.500H9zM0 10.500H8V18L0 17zM9 10.500H20V20L9 18.200z" fill="#fff" /></Icon>
    </StartButton>
    <TaskSearch>
      <Magnifier color="#fff" size={21} flip />
      <PlainInput $hint="#cfcfcf" placeholder="Type here to search" aria-label="Type here to search" />
      <Icon w={78} h={32}>
        <path d="M31 1c2 9 5 13 14 15-9 2-12 6-14 15-2-9-5-13-14-15 9-2 12-6 14-15z" fill="#fcc928" />
        <path d="M59 14c1 4 3 6 7 7-4 2-6 4-7 8-1-4-3-6-7-8 4-1 6-3 7-7z" fill="#fbd552" />
        <path d="M5 22l3 3 3 0-2 4-3 4-3-4-3-2 4-2z" fill="#1d9be6" />
        <circle cx="51" cy="3" r="3" fill="#d9603a" />
        <circle cx="74" cy="29" r="3" fill="#6fbf4a" />
      </Icon>
    </TaskSearch>
    <TaskButton aria-label="Task view">
      <Icon w={20}><P d="M0 0V3H13V0M0 20V17H13V20M0 6H13V14H0zM18 0V5M18 10V20M16 8H20" s="#fff" w={1.3} /></Icon>
    </TaskButton>
    {apps.map(([name, open, active, art]) => (
      <TaskButton key={name} $open={!!open} $active={!!active} aria-label={name}>
        <Icon w={30}>{art}</Icon>
      </TaskButton>
    ))}
    <Tray>
      <Weather>
        <Icon w={30} h={30}>
          <path d="M6 30C-2 30-2 19 6 19 8 10 20 9 22 17c11 0 10 13 2 13z" fill="#8cb4f2" />
          <circle cx="22" cy="8" r="8" fill="#c42b1c" />
          <P d="M20 6L22.500 4V12" s="#fff" w={1.6} />
        </Icon>
        26°C
        <Arabic dir="rtl" lang="ar">غائم غالبًا</Arabic>
      </Weather>
      {trayIcons.map(([name, art]) => (
        <TrayItem key={name} aria-label={name}><Icon w={20}>{art}</Icon></TrayItem>
      ))}
      <TrayItem $w={40} aria-label="Touch keyboard">
        <Icon w={30} h={17}>
          <R x={0.5} y={0.5} w={29} h={16} s="#fff" sw={1.2} />
          <P d="M4 5H26M4 9H26" s="#fff" w={1.5} strokeDasharray="2 2" />
          <P d="M7 13H23" s="#fff" w={1.5} />
        </Icon>
      </TrayItem>
      <TrayItem $w={46}>ENG</TrayItem>
      <Clock>2:39 PM<br />3/31/2026</Clock>
      <TrayItem $w={60} aria-label="Notifications">
        <Icon w={32} h={32}>
          <path d="M1 2H21V19H12L7 24V19H1z" fill="#fff" />
          <P d="M5 7H17M5 11H17M5 15H13" s="#1c1c1c" />
          <circle cx="21" cy="22" r="10" fill="#333" stroke="#999" />
          <P d="M18.500 19L21.500 17V28" s="#fff" w={2} />
        </Icon>
      </TrayItem>
      <DesktopEdge />
    </Tray>
  </Taskbar>
);

/* ---------- overlays ---------- */

const ActivateNotice = styled.div`
  position: fixed;
  right: 80px;
  bottom: 95px;
  z-index: 2;
  width: 286px;
  color: rgba(120, 120, 120, 0.5);
  font-size: 17px;
  line-height: 30px;
  white-space: nowrap;
  pointer-events: none;
  strong { display: block; font-size: 24px; font-weight: 400; }
`;
const Watermark = styled.div`
  position: fixed;
  left: 50%;
  bottom: 0;
  z-index: 2;
  width: 216px;
  height: 116px;
  margin-left: -108px;
  text-align: center;
  white-space: nowrap;
  pointer-events: none;
`;
const WatermarkScript = styled.div`
  height: 74px;
  color: rgba(200, 200, 200, 0.5);
  font-family: "DejaVu Sans", sans-serif;
  font-size: 64px;
  font-weight: 700;
  line-height: 72px;
`;
const WatermarkSite = styled.div`
  color: rgba(225, 225, 225, 0.8);
  font-family: Lato, "Open Sans", sans-serif;
  font-size: 38px;
  font-weight: 700;
  line-height: 38px;
`;
const WatermarkDots = styled.div`
  position: absolute;
  left: 17px;
  top: 66px;
`;

export default function App() {
  return (
    <>
      <GlobalStyle />
      <Shell>
        <Title />
        <RibbonArea />
        <Workspace>
          <LeftNav />
          <Center>
            <CanvasRow>
              <Canvas>
                <ReportPage>
                  <div>
                    <BackButton aria-label="Back">
                      <Icon w={32}>
                        <circle cx="16" cy="16" r="14" stroke="#555" strokeWidth="3" />
                        <P d="M25 16H8M15 8L7 16 15 24" s="#555" w={2.8} />
                      </Icon>
                    </BackButton>
                    <OrdersTable />
                  </div>
                  <ScrollThumb />
                </ReportPage>
              </Canvas>
              <FiltersPane>
                <button aria-label="Expand filters"><DoubleChevron left /></button>
                <FunnelButton aria-label="Filters">
                  <Icon w={15}><P d="M14 1V14L8 10H1V5H8z" w={1.4} /></Icon>
                </FunnelButton>
                <FiltersTitle>Filters</FiltersTitle>
              </FiltersPane>
            </CanvasRow>
            <PagesBar>
              <LayoutSwitch>
                <LayoutButton $active aria-label="Desktop layout">
                  <Icon w={24} h={20}><P d="M1 1H23V15H1zM12 15V18M8 19H16" s="#605e5c" w={1.6} /></Icon>
                </LayoutButton>
                <LayoutButton aria-label="Mobile layout">
                  <Icon w={17} h={25}><R x={1} y={1} w={15} h={23} s="#605e5c" rx={1} /><path d="M7 20h3v2H7z" fill="#605e5c" /></Icon>
                </LayoutButton>
                <StepButton aria-label="Previous page"><Icon w={6} h={10}><path d="M6 0V10L0 5z" fill={GREY} /></Icon></StepButton>
                <StepButton aria-label="Next page"><Icon w={6} h={10}><path d="M0 0V10L6 5z" fill={GREY} /></Icon></StepButton>
              </LayoutSwitch>
              <PageTab $w={123}>Dashboard</PageTab>
              <PageTab $w={99}>ToolTip</PageTab>
              <PageTab $w={137} $active>DrillThrough<CloseMark>x</CloseMark></PageTab>
              <AddPage aria-label="New page">
                <Icon w={14}><P d="M7 0V14M0 7H14" s="#fff" w={4} /></Icon>
              </AddPage>
            </PagesBar>
          </Center>
          <Visualizations />
          <DataPane />
        </Workspace>
        <StatusBar>
          Page 3 of 3
          <StorageMode>Storage Mode: Mixed</StorageMode>
          <ZoomButton aria-label="Zoom out">-</ZoomButton>
          <ZoomSlider type="range" min="10" max="190" defaultValue="83" aria-label="Zoom" />
          <ZoomButton aria-label="Zoom in">+</ZoomButton>
          <ZoomValue>83%</ZoomValue>
          <button aria-label="Fit to page">
            <Icon w={21} h={16}>
              <R x={1} y={1} w={19} h={14} s="#605e5c" sw={1.6} />
              <P d="M4 6V4H7M14 4H17V6M17 10V12H14M7 12H4V10" s="#605e5c" w={1.3} />
            </Icon>
          </button>
        </StatusBar>
        <WindowsTaskbar />
      </Shell>
      <ActivateNotice>
        <strong>Activate Windows</strong>
        Go to Settings to activate Windows.
      </ActivateNotice>
      <Watermark>
        <WatermarkScript dir="rtl" lang="ar">نفـذلى</WatermarkScript>
        <WatermarkSite>nafezly.com</WatermarkSite>
        <WatermarkDots>
          <Icon w={30} h={16}>
            <circle cx="7" cy="8" r="7" fill="rgba(225,225,225,.8)" />
            <circle cx="23" cy="8" r="7" fill="rgba(225,225,225,.8)" />
          </Icon>
        </WatermarkDots>
      </Watermark>
    </>
  );
}
